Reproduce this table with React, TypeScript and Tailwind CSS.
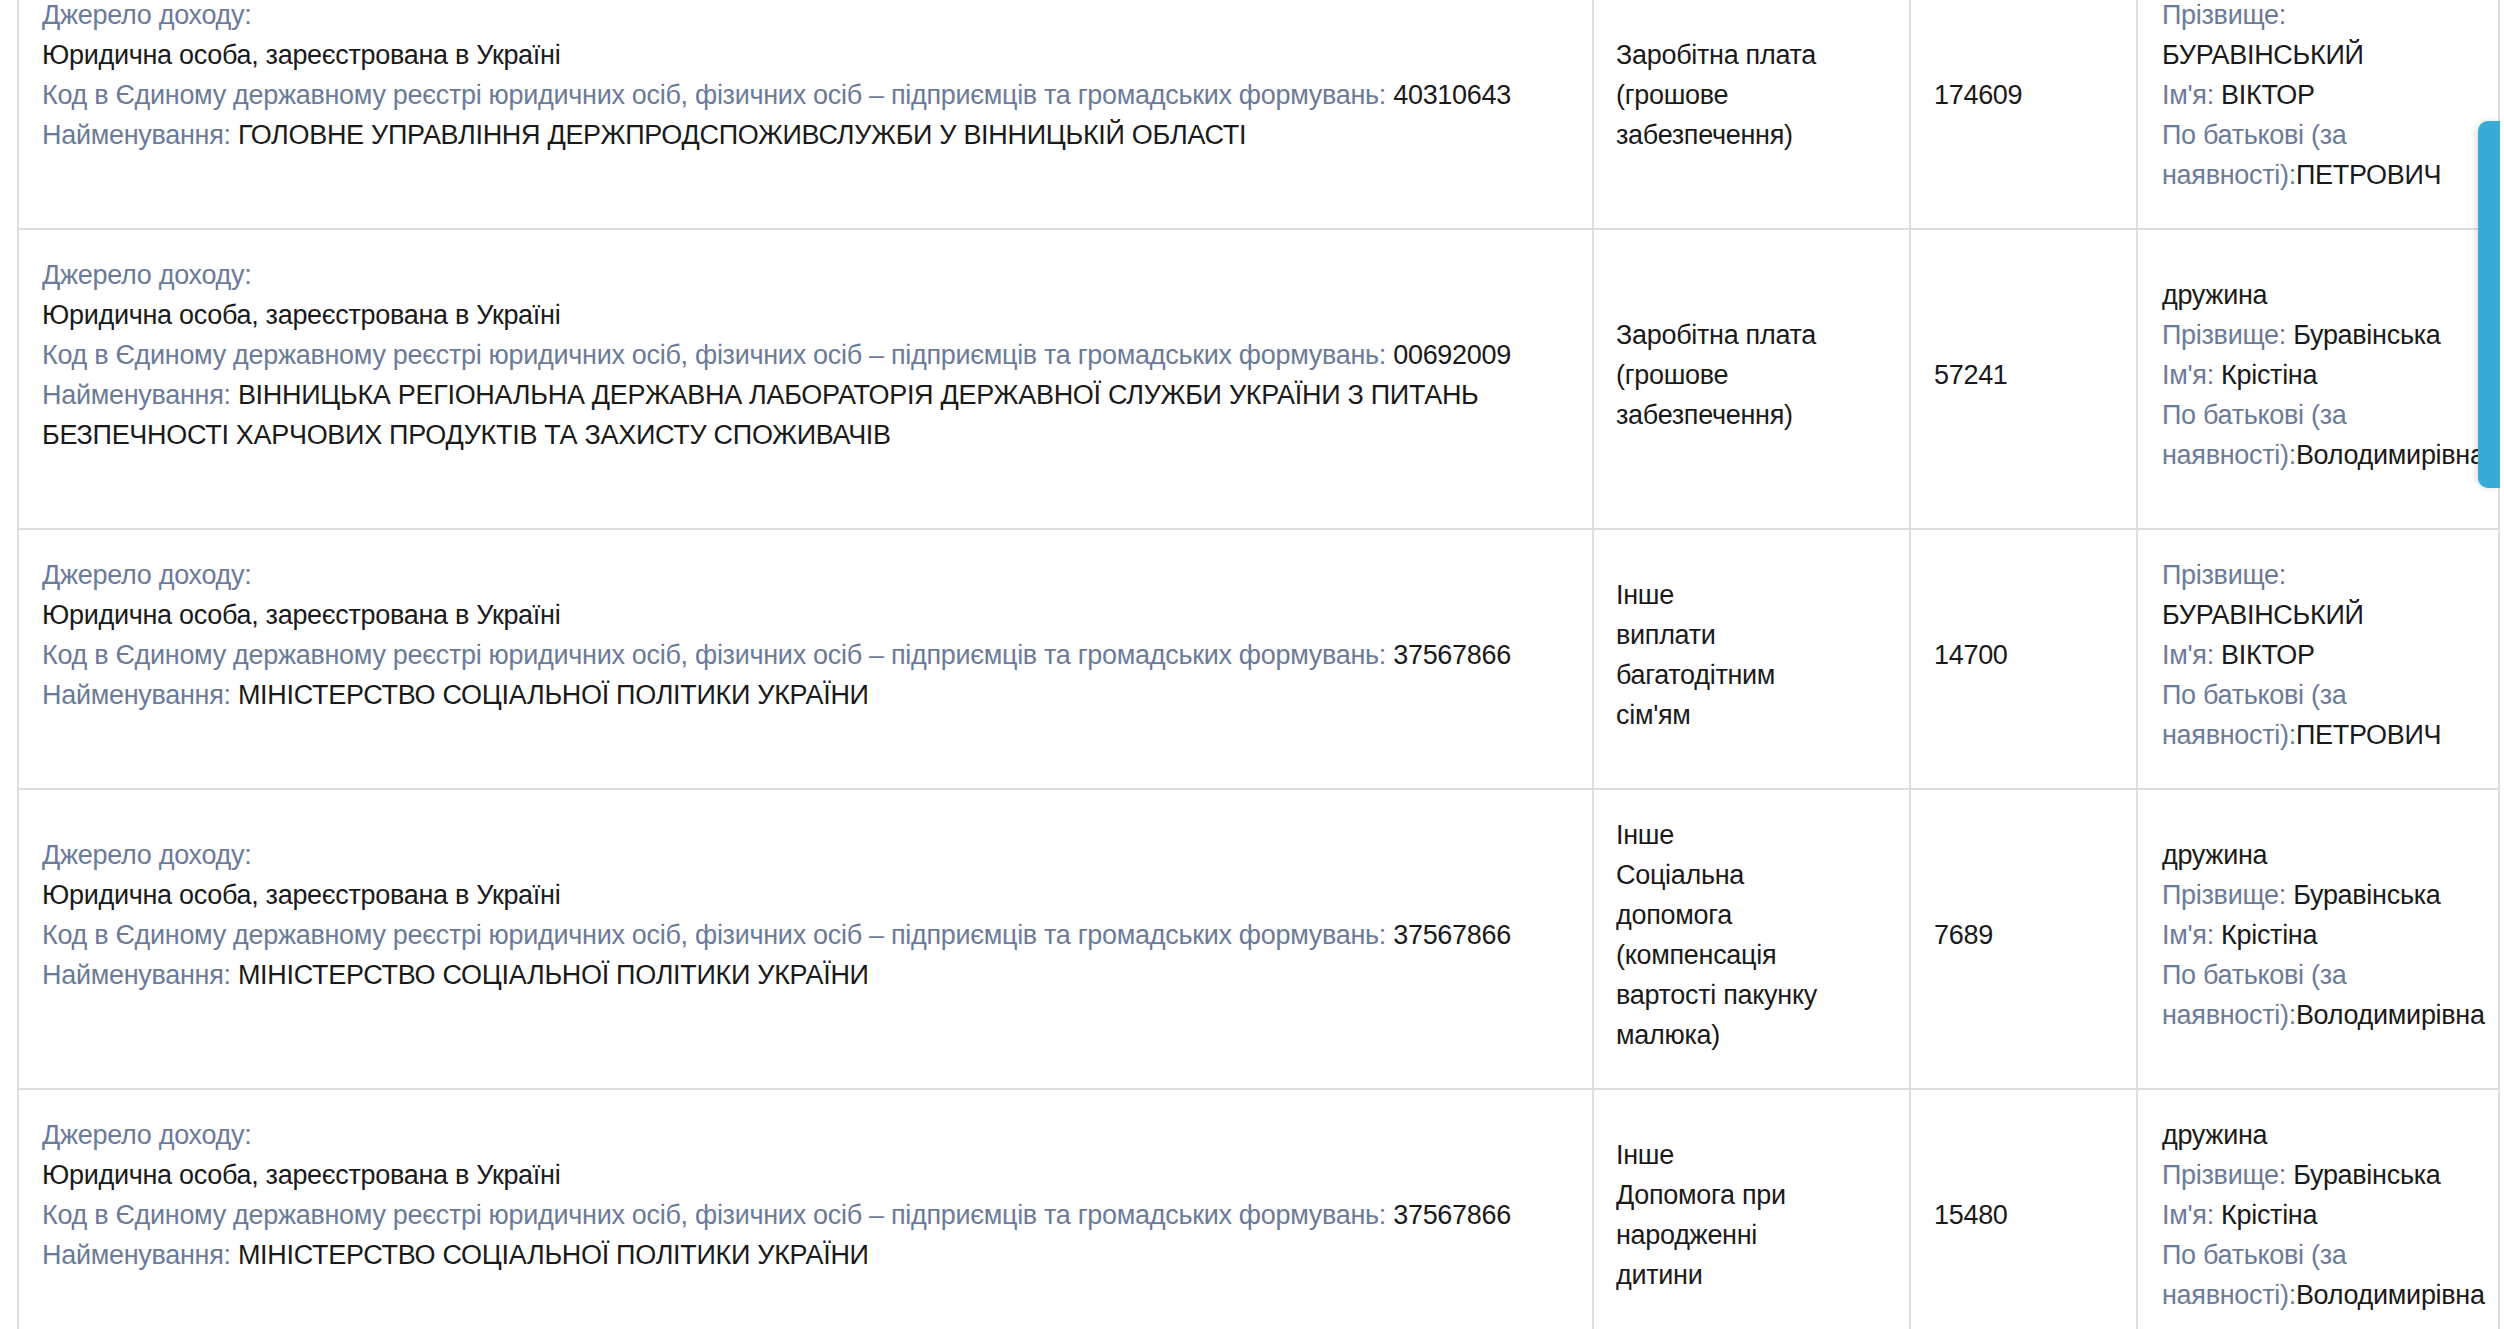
import React from "react";

type Seg = { l?: string; v?: string };
type Line = Seg[];

const L = (l: string, v?: string): Line => [{ l, v }];
const V = (v: string): Line => [{ v }];

const KOD =
  "Код в Єдиному державному реєстрі юридичних осіб, фізичних осіб – підприємців та громадських формувань:";

const source = (code: string, names: string[]): Line[] => [
  L("Джерело доходу:"),
  V("Юридична особа, зареєстрована в Україні"),
  L(KOD, " " + code),
  L("Найменування:", " " + names[0]),
  ...names.slice(1).map((n) => V(n)),
];

const husband: Line[] = [
  L("Прізвище:"),
  V("БУРАВІНСЬКИЙ"),
  L("Ім'я:", " ВІКТОР"),
  L("По батькові (за"),
  L("наявності):", "ПЕТРОВИЧ"),
];

const wife: Line[] = [
  V("дружина"),
  L("Прізвище:", " Буравінська"),
  L("Ім'я:", " Крістіна"),
  L("По батькові (за"),
  L("наявності):", "Володимирівна"),
];

type Row = { src: Line[]; type: string[]; sum: string; person: Line[]; h: string };

const rows: Row[] = [
  {
    src: source("40310643", ["ГОЛОВНЕ УПРАВЛІННЯ ДЕРЖПРОДСПОЖИВСЛУЖБИ У ВІННИЦЬКІЙ ОБЛАСТІ"]),
    type: ["Заробітна плата", "(грошове", "забезпечення)"],
    sum: "174609",
    person: husband,
    h: "h-[260px]",
  },
  {
    src: source("00692009", [
      "ВІННИЦЬКА РЕГІОНАЛЬНА ДЕРЖАВНА ЛАБОРАТОРІЯ ДЕРЖАВНОЇ СЛУЖБИ УКРАЇНИ З ПИТАНЬ",
      "БЕЗПЕЧНОСТІ ХАРЧОВИХ ПРОДУКТІВ ТА ЗАХИСТУ СПОЖИВАЧІВ",
    ]),
    type: ["Заробітна плата", "(грошове", "забезпечення)"],
    sum: "57241",
    person: wife,
    h: "h-[300px]",
  },
  {
    src: source("37567866", ["МІНІСТЕРСТВО СОЦІАЛЬНОЇ ПОЛІТИКИ УКРАЇНИ"]),
    type: ["Інше", "виплати", "багатодітним", "сім'ям"],
    sum: "14700",
    person: husband,
    h: "h-[260px]",
  },
  {
    src: source("37567866", ["МІНІСТЕРСТВО СОЦІАЛЬНОЇ ПОЛІТИКИ УКРАЇНИ"]),
    type: ["Інше", "Соціальна", "допомога", "(компенсація", "вартості пакунку", "малюка)"],
    sum: "7689",
    person: wife,
    h: "h-[300px]",
  },
  {
    src: source("37567866", ["МІНІСТЕРСТВО СОЦІАЛЬНОЇ ПОЛІТИКИ УКРАЇНИ"]),
    type: ["Інше", "Допомога при", "народженні", "дитини"],
    sum: "15480",
    person: wife,
    h: "h-[260px]",
  },
];

function Lines({ lines }: { lines: Line[] }) {
  return (
    <div>
      {lines.map((line, i) => (
        <div key={i} className="whitespace-nowrap h-[40px]">
          {line.map((s, j) => (
            <React.Fragment key={j}>
              {s.l && <span className="text-[#6b7b99]">{s.l}</span>}
              {s.v && <span>{s.v}</span>}
            </React.Fragment>
          ))}
        </div>
      ))}
    </div>
  );
}

export default function App() {
  return (
    <div
      className="relative w-[2504px] h-[1329px] overflow-hidden bg-white text-[#1a1a1a] text-[27px] leading-[40px] tracking-[-0.3px]"
      style={{ fontFamily: '"Liberation Sans", Arial, sans-serif' }}
    >
      <div className="ml-[17px] mt-[-30px] w-[2483px]">
        {rows.map((r, i) => (
          <div
            key={i}
            className={`grid grid-cols-[1575px_317px_227px_364px] border-b-2 border-[#dedede] ${r.h}`}
          >
            <div className="border-l-2 border-[#dedede] pl-[23px] pb-[9px] flex flex-col justify-center">
              <Lines lines={r.src} />
              <div className="h-[40px]" />
            </div>
            <div className="border-l-2 border-[#dedede] pl-[22px] pb-[9px] flex flex-col justify-center overflow-hidden">
              <Lines lines={r.type.map((t) => V(t))} />
            </div>
            <div className="border-l-2 border-[#dedede] pl-[23px] pb-[9px] flex flex-col justify-center">
              <div>{r.sum}</div>
            </div>
            <div className="border-l-2 border-r-2 border-[#dedede] pl-[24px] pb-[9px] flex flex-col justify-center">
              <Lines lines={r.person} />
            </div>
          </div>
        ))}
      </div>
      <div className="absolute left-[2478px] top-[121px] w-[22px] h-[367px] rounded-l-[10px] bg-[#38acd6] shadow-[-2px_0_6px_rgba(0,0,0,0.12)]" />
    </div>
  );
}
